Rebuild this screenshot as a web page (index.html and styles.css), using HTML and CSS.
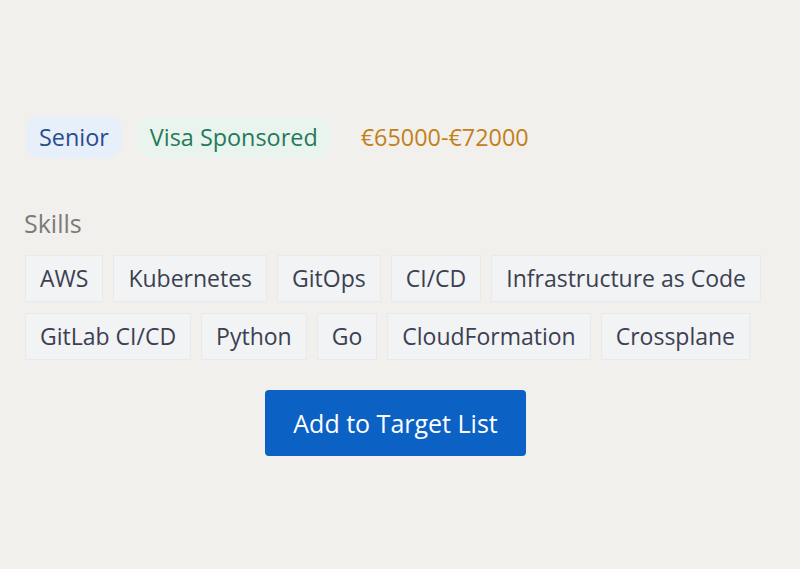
FILE: index.html
```html
<!doctype html>
<html lang=en>
  <head>
    <meta charset=utf-8 />
    <title>Job details</title>
    <link rel="stylesheet" href="styles.css">
  </head>
  <body>
    <section class="job">
      <div class="badges">
        <span class="badge badge-level">Senior</span>
        <span class="badge badge-visa">Visa Sponsored</span>
        <span class="badge badge-salary">€65000-€72000</span>
      </div>

      <h4 class="skills-title">Skills</h4>
      <ul class="skills">
        <li>AWS</li>
        <li>Kubernetes</li>
        <li>GitOps</li>
        <li>CI/CD</li>
        <li>Infrastructure as Code</li>
        <li>GitLab CI/CD</li>
        <li>Python</li>
        <li>Go</li>
        <li>CloudFormation</li>
        <li>Crossplane</li>
      </ul>

      <div class="actions">
        <button type=button class="add-target">Add to Target List</button>
      </div>
    </section>
  </body>
</html>
```

FILE: styles.css
```css
body {
  background: #f2f0ed;
  font-family: 'Open Sans', 'Noto Sans', sans-serif;
  margin: 0;
  padding: 0;
}

.job {
  padding: 116px 33px 0 24px;
}

.badges {
  display: flex;
  gap: 15px;
  margin-left: 2px;
}

.badge {
  border-radius: 14px;
  font-size: 23.4px;
  line-height: 42px;
  padding: 0 13px;
}

.badge-level {
  background: #e6effa;
  color: #2b4c8c;
}

.badge-visa {
  background: #eaf4ee;
  color: #247a5c;
}

.badge-salary {
  color: #c2801b;
  padding-left: 15px;
}

.skills-title {
  color: #7b7b7b;
  font-size: 25px;
  font-weight: normal;
  line-height: 30px;
  margin: 50px 0 17px 0;
}

.skills {
  display: flex;
  flex-wrap: wrap;
  gap: 11px 10px;
  list-style: none;
  margin: 0 0 0 1px;
  padding: 0;
}

.skills li {
  background: #f2f3f5;
  border: 1px solid #ebe8ec;
  color: #3b4150;
  font-size: 23px;
  line-height: 45px;
  padding: 0 14px;
}

.actions {
  display: flex;
  justify-content: center;
  margin-top: 30px;
}

.add-target {
  background: #0b62c4;
  border: 0;
  border-radius: 4px;
  color: #fff;
  font-family: inherit;
  font-size: 25px;
  height: 66px;
  padding: 0 28px;
}
```
